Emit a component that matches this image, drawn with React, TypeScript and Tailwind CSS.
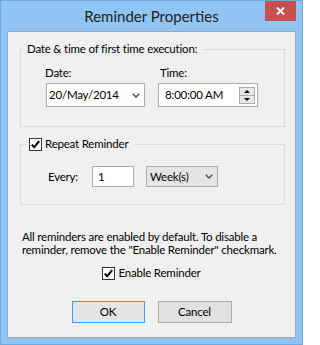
import React from "react";

function CheckBox() {
  return (
    <span className="flex h-[13px] w-[13px] shrink-0 items-center justify-center border border-[#333333] bg-white">
      <svg viewBox="0 0 11 11" className="h-[11px] w-[11px]" aria-hidden="true">
        <path d="M1.8 5.6 L4.2 8.2 L9.2 2.2" stroke="#000" strokeWidth="2.1" fill="none" />
      </svg>
    </span>
  );
}

function Chevron() {
  return (
    <svg viewBox="0 0 8 5" className="h-[5px] w-[8px]" aria-hidden="true">
      <path d="M0.8 0.8 L4 4 L7.2 0.8" stroke="#555" strokeWidth="1.6" fill="none" />
    </svg>
  );
}

function Spinner() {
  return (
    <div className="flex flex-col">
      <span className="flex h-[9px] w-[16px] items-center justify-center border border-[#acacac] bg-[#e8e8e8]">
        <svg viewBox="0 0 6 3" className="h-[3px] w-[6px]"><path d="M0 3 L3 0 L6 3 Z" fill="#000" /></svg>
      </span>
      <span className="-mt-px flex h-[9px] w-[16px] items-center justify-center border border-[#acacac] bg-[#e8e8e8]">
        <svg viewBox="0 0 6 3" className="h-[3px] w-[6px]"><path d="M0 0 L3 3 L6 0 Z" fill="#000" /></svg>
      </span>
    </div>
  );
}

export default function App() {
  return (
    <div className="flex h-[345px] w-[303px] flex-col border border-[#6fa8dc] bg-[#8fc4f4] font-['Lato',sans-serif] text-[11.5px] tracking-[-0.2px] text-black">
      {/* title bar */}
      <div className="grid h-[30px] grid-cols-[1fr_auto_1fr]">
        <div />
        <div className="pt-[5px] text-[15px] leading-[20px] tracking-normal whitespace-nowrap text-[#222]">Reminder Properties</div>
        <div className="flex justify-end pr-[6px]">
          <button
            type="button"
            aria-label="Close"
            className="flex h-[20px] w-[31px] items-center justify-center bg-[#c75050]"
          >
            <svg viewBox="0 0 9 8" className="h-[8px] w-[9px]">
              <path d="M1 0.5 L8 7.5 M8 0.5 L1 7.5" stroke="#fff" strokeWidth="1.8" />
            </svg>
          </button>
        </div>
      </div>

      {/* client area */}
      <div className="mx-[6px] flex h-[307px] flex-col border border-[#9aa9b8] bg-[#f0f0f0]">
        <fieldset className="mt-[10px] ml-[12px] h-[85px] w-[265px] border border-[#dcdcdc] px-[4px]">
          <legend className="pr-[6px] pl-[2px] leading-[14px] whitespace-nowrap">Date &amp; time of first time execution:</legend>
          <div className="mt-[9px] ml-[21px] flex gap-[13px]">
            <div className="flex w-[99px] flex-col">
              <span className="-ml-px h-[15px] leading-[15px]">Date:</span>
              <div className="mt-[3px] flex h-[24px] items-center justify-between border border-[#abadb3] bg-white pr-[4px] pl-[2px]">
                <span>20/May/2014</span>
                <Chevron />
              </div>
            </div>
            <div className="flex w-[100px] flex-col">
              <span className="h-[15px] pl-[2px] leading-[15px]">Time:</span>
              <div className="mt-[3px] flex h-[24px] items-center justify-between border border-[#abadb3] bg-white pr-[2px] pl-[6px]">
                <span>8:00:00 AM</span>
                <Spinner />
              </div>
            </div>
          </div>
        </fieldset>

        <fieldset className="mt-[10px] ml-[12px] h-[68px] w-[265px] border border-[#dcdcdc] px-[5px]">
          <legend className="flex items-center gap-[3px] pr-[6px] pl-[3px] leading-[14px] whitespace-nowrap">
            <CheckBox />
            <span>Repeat Reminder</span>
          </legend>
          <div className="mt-[15px] flex h-[21px] items-center">
            <span className="ml-[22px] w-[44px]">Every:</span>
            <div className="flex h-[21px] w-[42px] items-center border border-[#abadb3] bg-white pl-[5px]">1</div>
            <div className="ml-[12px] flex h-[21px] w-[72px] items-center justify-between border border-[#acacac] bg-[#e5e5e5] pr-[4px] pl-[3px]">
              <span>Week(s)</span>
              <Chevron />
            </div>
          </div>
        </fieldset>

        <p className="mt-[25px] ml-[14px] leading-[13px] whitespace-nowrap">
          All reminders are enabled by default. To disable a
          <br />
          reminder, remove the "Enable Reminder" checkmark.
        </p>

        <label className="mt-[10px] flex items-center justify-center gap-[3px] leading-[14px]">
          <CheckBox />
          <span>Enable Reminder</span>
        </label>

        <div className="mt-[21px] flex justify-center gap-[13px]">
          <button type="button" className="h-[22px] w-[73px] border border-[#3c9af0] bg-[#e5e5e5]">
            OK
          </button>
          <button type="button" className="h-[22px] w-[74px] border border-[#acacac] bg-[#e1e1e1]">
            Cancel
          </button>
        </div>
      </div>
    </div>
  );
}
